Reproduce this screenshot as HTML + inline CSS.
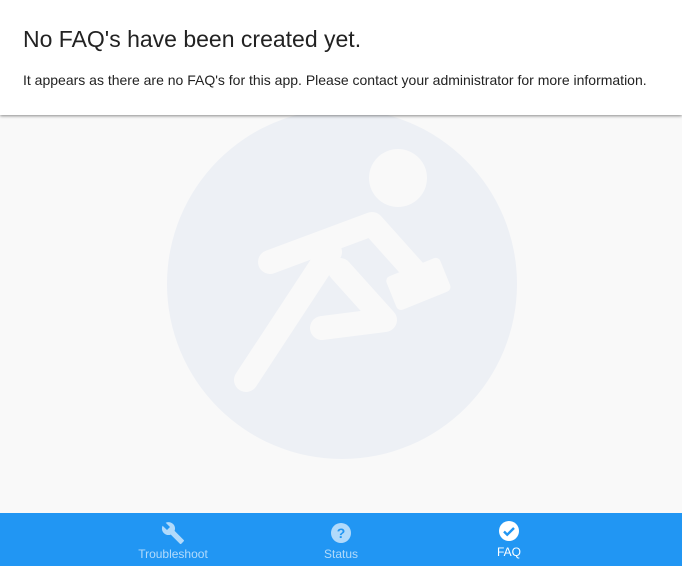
<!DOCTYPE html>
<html><head><style>
body{margin:0;width:682px;height:566px;overflow:hidden;background:#f9f9f9;font-family:"Liberation Sans",sans-serif;position:relative}
.hd{position:absolute;top:0;left:0;width:682px;height:115px;background:#fff;box-shadow:0 1px 3px rgba(0,0,0,.45);z-index:2}
.hd h1{position:absolute;left:23px;top:26px;margin:0;font-size:23px;font-weight:normal;color:#222}
.hd p{position:absolute;left:23px;top:72px;margin:0;font-size:14px;color:#222}
svg.bg{position:absolute;left:0;top:0}
.nav{position:absolute;left:0;top:513px;width:682px;height:53px;background:#2196f3}
.it{position:absolute;top:0;width:120px;text-align:center;font-size:12px;color:rgba(255,255,255,.65)}
.it svg{display:block;margin:8px auto 2px}
</style></head><body>
<svg class="bg" width="682" height="566">
<circle cx="342" cy="284" r="175" fill="#edf0f5"/>
<g stroke="#f9f9f9" stroke-linecap="round" stroke-linejoin="round" fill="none">
<circle cx="398" cy="178" r="29" fill="#f9f9f9" stroke="none"/>
<polyline points="270,262 372,224 415,272" stroke-width="24"/>
<line x1="330" y1="252" x2="246" y2="380" stroke-width="24"/>
<polyline points="340,270 385,320 322,328" stroke-width="24"/>
<g transform="rotate(-22 418 283)"><rect x="389" y="266" width="58" height="36" rx="5" fill="#f9f9f9" stroke="none"/></g>
</g>
</svg>
<div class="hd"><h1>No FAQ's have been created yet.</h1><p>It appears as there are no FAQ's for this app. Please contact your administrator for more information.</p></div>
<div class="nav">
<div class="it" style="left:113px"><svg width="24" height="24" viewBox="0 0 24 24"><path fill="rgba(255,255,255,.65)" d="M22.7 19l-9.1-9.1c.9-2.3.4-5-1.5-6.9-2-2-5-2.4-7.4-1.3L9 6 6 9 1.6 4.7C.4 7.1.9 10.1 2.9 12.1c1.9 1.9 4.6 2.4 6.9 1.5l9.1 9.1c.4.4 1 .4 1.4 0l2.3-2.300c.5-.4.5-1.1.1-1.4z"/></svg>Troubleshoot</div>
<div class="it" style="left:281px"><svg width="24" height="24" viewBox="0 0 24 24"><circle cx="12" cy="12" r="10" fill="rgba(255,255,255,.65)"/><text x="12" y="17" text-anchor="middle" font-size="14" font-weight="bold" fill="#2196f3" font-family="Liberation Sans">?</text></svg>Status</div>
<div class="it" style="left:449px;color:#fff"><svg width="24" height="24" viewBox="0 0 24 24" style="margin-top:6px"><circle cx="12" cy="12" r="10" fill="#fff"/><path d="M7 12.5l3.2 3.2L17 9" stroke="#2196f3" stroke-width="2.4" fill="none"/></svg>FAQ</div>
</div>
</body></html>
